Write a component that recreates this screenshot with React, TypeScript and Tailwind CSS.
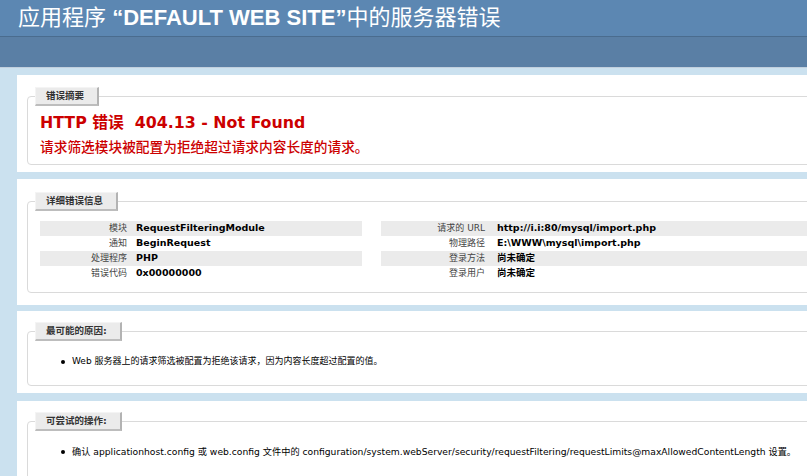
import React from "react";

const leftRows = [
  ["模块", "RequestFilteringModule"],
  ["通知", "BeginRequest"],
  ["处理程序", "PHP"],
  ["错误代码", "0x00000000"],
];

const rightRows = [
  ["请求的 URL", "http://i.i:80/mysql/import.php"],
  ["物理路径", "E:\\WWW\\mysql\\import.php"],
  ["登录方法", "尚未确定"],
  ["登录用户", "尚未确定"],
];

function Legend({ children }: { children: React.ReactNode }) {
  return (
    <legend className="-ml-[5px] h-[19px] pl-[10px] pr-[13px] flex items-center bg-[#ebebeb] border-t border-l border-[#f4f4f4] border-r-2 border-b-2 border-r-[#b3b3b3] border-b-[#bdbdbd] text-[9.5px] font-bold text-[#333] leading-none">
      {children}
    </legend>
  );
}

function DetailTable({ rows, labelW, labelPr, width }: { rows: string[][]; labelW: number; labelPr: number; width: number }) {
  return (
    <div style={{ width }}>
      {rows.map(([label, value], i) => (
        <div key={i} className={`flex h-[15px] items-center ${i % 2 === 0 ? "bg-[#ebebeb]" : ""}`}>
          <div
            className="shrink-0 text-right text-[9px] text-[#444]"
            style={{ width: labelW, paddingRight: labelPr }}
          >
            {label}
          </div>
          <div className="text-[9.5px] font-bold text-black whitespace-nowrap">{value}</div>
        </div>
      ))}
    </div>
  );
}

export default function App() {
  return (
    <div className="w-[807px] h-[476px] overflow-hidden bg-[#cbe1ef] font-['DejaVu_Sans','Noto_Sans_CJK_SC',sans-serif]">
      {/* header */}
      <div className="h-[36px] bg-[#5c87b2] pl-[18px] flex items-center">
        <h1 className="text-[22px] text-white font-normal whitespace-nowrap font-['Liberation_Sans','Noto_Sans_CJK_SC',sans-serif] leading-none">
          应用程序 <span className="font-bold">“DEFAULT WEB SITE”</span>中的服务器错误
        </h1>
      </div>
      <div className="h-[32px] bg-[#5a7fa5] border-t border-t-[#4a6c8e] border-b border-b-[#c1cfdd]" />

      <div className="pl-[17px] pt-[7px] flex flex-col w-[1040px]">
        {/* summary */}
        <div className="bg-white pl-[10px] pt-[12px] pb-[7px]">
          <fieldset className="border border-[#dadada] rounded-[4px] pl-[12px] pb-[10px] h-[78px]">
            <Legend>错误摘要</Legend>
            <h2 className="mt-[7px] h-[20px] flex items-center text-[15.8px] font-bold text-[#cc0000] whitespace-pre">
              HTTP 错误  404.13 - Not Found
            </h2>
            <h3 className="mt-[5px] h-[18px] flex items-center text-[13.7px] font-medium text-[#cc0000]">
              请求筛选模块被配置为拒绝超过请求内容长度的请求。
            </h3>
          </fieldset>
        </div>

        {/* details */}
        <div className="mt-[7px] bg-white pl-[10px] pt-[13px] pb-[12px]">
          <fieldset className="border border-[#dadada] rounded-[4px] pl-[12px] h-[101px]">
            <Legend>详细错误信息</Legend>
            <div className="mt-[10px] flex gap-[19px]">
              <DetailTable rows={leftRows} labelW={96} labelPr={9} width={322} />
              <DetailTable rows={rightRows} labelW={116} labelPr={12} width={580} />
            </div>
          </fieldset>
        </div>

        {/* cause */}
        <div className="mt-[6px] bg-white pl-[10px] pt-[11px] pb-[7px]">
          <fieldset className="border border-[#dadada] rounded-[4px] pl-[12px] h-[64px]">
            <Legend>最可能的原因:</Legend>
            <div className="mt-[14px] h-[14px] flex items-center pl-[21px] text-[9px] text-black">
              <span className="w-[4px] h-[4px] rounded-full bg-black mr-[7px]" />
              Web 服务器上的请求筛选被配置为拒绝该请求，因为内容长度超过配置的值。
            </div>
          </fieldset>
        </div>

        {/* actions */}
        <div className="mt-[8px] bg-white pl-[10px] pt-[11px] pb-[40px]">
          <fieldset className="border border-[#dadada] rounded-[4px] pl-[12px] h-[80px]">
            <Legend>可尝试的操作:</Legend>
            <div className="mt-[14px] h-[14px] flex items-center pl-[21px] text-[9.2px] text-black whitespace-nowrap">
              <span className="w-[4px] h-[4px] rounded-full bg-black mr-[7px]" />
              确认 applicationhost.config 或 web.config 文件中的 configuration/system.webServer/security/requestFiltering/requestLimits@maxAllowedContentLength 设置。
            </div>
          </fieldset>
        </div>
      </div>
    </div>
  );
}
